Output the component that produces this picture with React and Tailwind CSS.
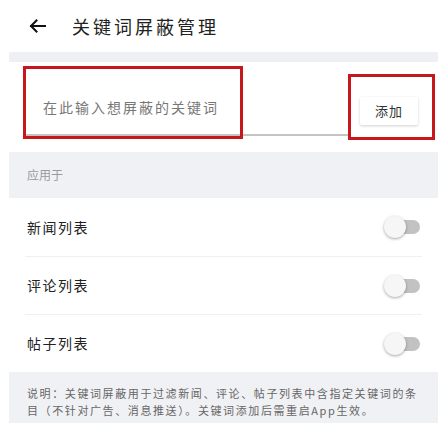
import React from "react";

function Toggle() {
  return (
    <div className="relative w-[36px] h-[22px]">
      <div className="absolute right-0 top-[4px] w-[26px] h-[14px] rounded-full bg-[#c2c2c2]" />
      <div className="absolute left-0 top-0 w-[22px] h-[22px] rounded-full bg-[#f6f6f6] shadow-[0_1px_3px_rgba(0,0,0,0.35)]" />
    </div>
  );
}

function Row({ label, h }) {
  return (
    <div className={`flex items-center justify-between pl-[18px] pr-[18px] ${h}`}>
      <span className="text-[14px] tracking-[1.5px] text-[#222]">{label}</span>
      <Toggle />
    </div>
  );
}

export default function App() {
  return (
    <div
      className="w-[444px] h-[423px] bg-white overflow-hidden"
      style={{ fontFamily: '"Noto Sans CJK SC", "Noto Sans", sans-serif' }}
    >
      <div className="ml-[9px] w-[429px] h-full flex flex-col">
        {/* header */}
        <div className="h-[52px] flex items-center pl-[20px] shrink-0">
          <svg width="17" height="14" viewBox="0 0 17 14" fill="none">
            <path d="M16 7H2M7.5 1.5L2 7l5.5 5.5" stroke="#111" strokeWidth="2" strokeLinecap="square" />
          </svg>
          <span className="ml-[26px] text-[18px] tracking-[3px] text-[#222] leading-none">关键词屏蔽管理</span>
        </div>
        <div className="h-[10px] bg-[#eef0f3] shrink-0" />

        {/* input section */}
        <div className="relative h-[90px] flex shrink-0">
          <div className="ml-[16px] mt-[18px] w-[323px] h-[56px] border-b-2 border-[#c4c4c4] flex items-center pl-[18px]">
            <span className="text-[14px] tracking-[2px] text-[#777]">在此输入想屏蔽的关键词</span>
          </div>
          <button className="ml-[12px] mt-[35px] w-[58px] h-[28px] rounded-[2px] bg-white shadow-[0_1px_3px_rgba(0,0,0,0.18)] text-[13px] tracking-[1px] text-[#333] flex items-center justify-center">
            添加
          </button>
          <div className="absolute left-[14px] top-[4px] w-[220px] h-[73px] border-[3px] border-[#c8161d] pointer-events-none" />
          <div className="absolute left-[339px] top-[12px] w-[87px] h-[66px] border-[3px] border-[#c8161d] pointer-events-none" />
        </div>

        {/* apply to */}
        <div className="h-[46px] bg-[#f0f1f4] flex items-center pl-[18px] shrink-0">
          <span className="text-[12px] text-[#9a9a9a]">应用于</span>
        </div>

        <Row label="新闻列表" h="h-[58px]" />
        <div className="mx-[16px] h-px bg-[#f0f0f0]" />
        <Row label="评论列表" h="h-[57px]" />
        <div className="mx-[16px] h-px bg-[#f0f0f0]" />
        <Row label="帖子列表" h="h-[57px]" />

        <div className="flex-1 bg-[#f0f1f4] pl-[18px] pr-[10px] pt-[13px]">
          <p className="text-[11px] leading-[17px] tracking-[1.6px] text-[#666]">
            说明：关键词屏蔽用于过滤新闻、评论、帖子列表中含指定关键词的条目（不针对广告、消息推送）。关键词添加后需重启App生效。
          </p>
        </div>
      </div>
    </div>
  );
}
